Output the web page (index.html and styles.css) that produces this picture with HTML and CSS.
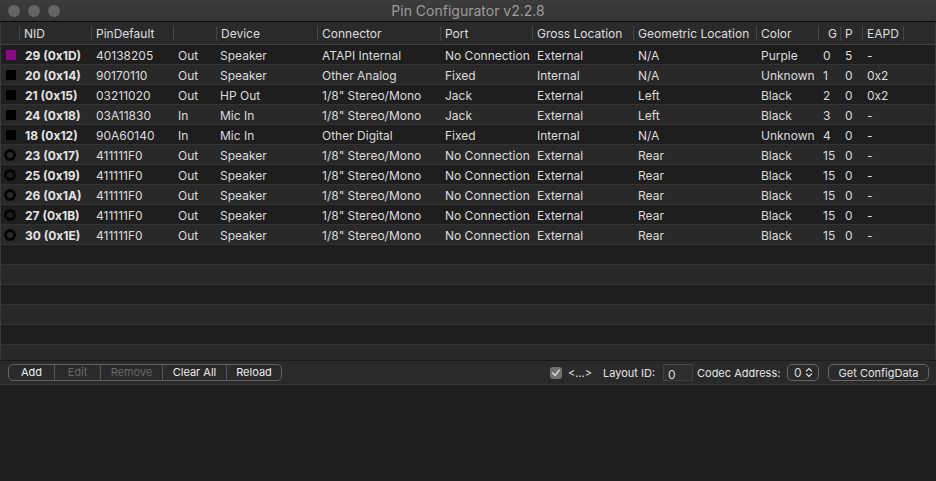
FILE: index.html
```html
<!DOCTYPE html>
<html>
<head>
<meta charset="utf-8">
<link rel="stylesheet" href="styles.css">
</head>
<body>
<div class="window">
  <div class="titlebar">
    <div class="lights"><span class="light"></span><span class="light"></span><span class="light"></span></div>
    <div class="title">Pin Configurator v2.2.8</div>
  </div>
  <div class="table">
    <div class="row head">
      <div class="c"></div>
      <div class="c">NID</div>
      <div class="c">PinDefault</div>
      <div class="c"></div>
      <div class="c">Device</div>
      <div class="c">Connector</div>
      <div class="c">Port</div>
      <div class="c">Gross Location</div>
      <div class="c">Geometric Location</div>
      <div class="c">Color</div>
      <div class="c right">G</div>
      <div class="c">P</div>
      <div class="c">EAPD</div>
      <div class="c last"></div>
    </div>
    <div class="body">
      <div class="row"><div class="c ic"><span class="sq purple"></span></div><div class="c nid">29 (0x1D)</div><div class="c">40138205</div><div class="c">Out</div><div class="c">Speaker</div><div class="c">ATAPI Internal</div><div class="c">No Connection</div><div class="c">External</div><div class="c">N/A</div><div class="c">Purple</div><div class="c">0</div><div class="c">5</div><div class="c">-</div><div class="c"></div></div>
      <div class="row"><div class="c ic"><span class="sq"></span></div><div class="c nid">20 (0x14)</div><div class="c">90170110</div><div class="c">Out</div><div class="c">Speaker</div><div class="c">Other Analog</div><div class="c">Fixed</div><div class="c">Internal</div><div class="c">N/A</div><div class="c">Unknown</div><div class="c">1</div><div class="c">0</div><div class="c">0x2</div><div class="c"></div></div>
      <div class="row"><div class="c ic"><span class="sq"></span></div><div class="c nid">21 (0x15)</div><div class="c">03211020</div><div class="c">Out</div><div class="c">HP Out</div><div class="c">1/8" Stereo/Mono</div><div class="c">Jack</div><div class="c">External</div><div class="c">Left</div><div class="c">Black</div><div class="c">2</div><div class="c">0</div><div class="c">0x2</div><div class="c"></div></div>
      <div class="row"><div class="c ic"><span class="sq"></span></div><div class="c nid">24 (0x18)</div><div class="c">03A11830</div><div class="c">In</div><div class="c">Mic In</div><div class="c">1/8" Stereo/Mono</div><div class="c">Jack</div><div class="c">External</div><div class="c">Left</div><div class="c">Black</div><div class="c">3</div><div class="c">0</div><div class="c">-</div><div class="c"></div></div>
      <div class="row"><div class="c ic"><span class="sq"></span></div><div class="c nid">18 (0x12)</div><div class="c">90A60140</div><div class="c">In</div><div class="c">Mic In</div><div class="c">Other Digital</div><div class="c">Fixed</div><div class="c">Internal</div><div class="c">N/A</div><div class="c">Unknown</div><div class="c">4</div><div class="c">0</div><div class="c">-</div><div class="c"></div></div>
      <div class="row"><div class="c ic"><span class="ring"></span></div><div class="c nid">23 (0x17)</div><div class="c">411111F0</div><div class="c">Out</div><div class="c">Speaker</div><div class="c">1/8" Stereo/Mono</div><div class="c">No Connection</div><div class="c">External</div><div class="c">Rear</div><div class="c">Black</div><div class="c">15</div><div class="c">0</div><div class="c">-</div><div class="c"></div></div>
      <div class="row"><div class="c ic"><span class="ring"></span></div><div class="c nid">25 (0x19)</div><div class="c">411111F0</div><div class="c">Out</div><div class="c">Speaker</div><div class="c">1/8" Stereo/Mono</div><div class="c">No Connection</div><div class="c">External</div><div class="c">Rear</div><div class="c">Black</div><div class="c">15</div><div class="c">0</div><div class="c">-</div><div class="c"></div></div>
      <div class="row"><div class="c ic"><span class="ring"></span></div><div class="c nid">26 (0x1A)</div><div class="c">411111F0</div><div class="c">Out</div><div class="c">Speaker</div><div class="c">1/8" Stereo/Mono</div><div class="c">No Connection</div><div class="c">External</div><div class="c">Rear</div><div class="c">Black</div><div class="c">15</div><div class="c">0</div><div class="c">-</div><div class="c"></div></div>
      <div class="row"><div class="c ic"><span class="ring"></span></div><div class="c nid">27 (0x1B)</div><div class="c">411111F0</div><div class="c">Out</div><div class="c">Speaker</div><div class="c">1/8" Stereo/Mono</div><div class="c">No Connection</div><div class="c">External</div><div class="c">Rear</div><div class="c">Black</div><div class="c">15</div><div class="c">0</div><div class="c">-</div><div class="c"></div></div>
      <div class="row"><div class="c ic"><span class="ring"></span></div><div class="c nid">30 (0x1E)</div><div class="c">411111F0</div><div class="c">Out</div><div class="c">Speaker</div><div class="c">1/8" Stereo/Mono</div><div class="c">No Connection</div><div class="c">External</div><div class="c">Rear</div><div class="c">Black</div><div class="c">15</div><div class="c">0</div><div class="c">-</div><div class="c"></div></div>
      <div class="row empty"></div>
      <div class="row empty"></div>
      <div class="row empty"></div>
      <div class="row empty"></div>
      <div class="row empty"></div>
      <div class="row empty"></div>
    </div>
  </div>
  <div class="toolbar">
    <div class="seg">
      <span class="sb w-add">Add</span>
      <span class="sb w-edit dis">Edit</span>
      <span class="sb w-rem dis">Remove</span>
      <span class="sb w-clear">Clear All</span>
      <span class="sb w-reload">Reload</span>
    </div>
    <div class="spacer"></div>
    <span class="check"><svg width="12" height="12" viewBox="0 0 12 12"><path d="M2.8 6.2 L5 8.5 L9.2 3.2" fill="none" stroke="#d0d0d0" stroke-width="1.6" stroke-linecap="round" stroke-linejoin="round"/></svg></span>
    <span class="lbl dots">&lt;...&gt;</span>
    <span class="lbl layout">Layout ID:</span>
    <span class="field">0</span>
    <span class="lbl codec">Codec Address:</span>
    <span class="popup">0<svg width="8" height="11" viewBox="0 0 8 11"><path d="M1.5 4 L4 1.5 L6.5 4 M1.5 7 L4 9.5 L6.5 7" fill="none" stroke="#d8d8d8" stroke-width="1.2" stroke-linecap="round" stroke-linejoin="round"/></svg></span>
    <span class="btn">Get ConfigData</span>
  </div>
  <div class="bottom"></div>
</div>
</body>
</html>
```

FILE: styles.css
```css
* { box-sizing: border-box; }
html, body { margin: 0; padding: 0; background: #1e1e1e; }
body {
  font-family: "Inter", "Liberation Sans", sans-serif;
  font-size: 12px;
  color: #dcdcdc;
}
.window {
  width: 936px;
  height: 481px;
  display: flex;
  flex-direction: column;
  background: #1e1e1e;
  overflow: hidden;
}
.titlebar {
  height: 22px;
  flex: none;
  display: flex;
  align-items: center;
  background: linear-gradient(#3c3c3c, #353535);
  border-bottom: 1px solid #0c0c0c;
  position: relative;
}
.lights {
  display: flex;
  gap: 8px;
  padding-left: 8px;
}
.light {
  width: 12px;
  height: 12px;
  border-radius: 50%;
  background: #646464;
}
.title {
  position: absolute;
  left: 0;
  right: 0;
  text-align: center;
  font-size: 14px;
  color: #9c9c9c;
  top: 2px;
}
.table {
  flex: none;
  height: 338px;
  display: flex;
  flex-direction: column;
  border-left: 1px solid #3a3a3a;
  border-right: 1px solid #3a3a3a;
  overflow: hidden;
  background: #282828;
}
.body { flex: none; }
.row {
  flex: none;
  display: grid;
  grid-template-columns: 19px 72px 82px 43px 101px 123px 92px 101px 123px 62px 22px 22px 41px 1fr;
  height: 20px;
  align-items: center;
  border-bottom: 1px solid #333333;
  white-space: nowrap;
}
.body .row:nth-child(odd) { background: #1e1e1e; }
.body .row:nth-child(even) { background: #292929; }
.row.head {
  height: 23px;
  background: #2a2a2a;
  border-bottom: 1px solid #404040;
  color: #dedede;
}
.head .c {
  border-right: 1px solid #454545;
  height: 15px;
  line-height: 15px;
}
.head .c.last { border-right: none; }
.head .c.right { text-align: right; padding-right: 3px; }
.c {
  padding-left: 4px;
  overflow: hidden;
}
.body .c {
  height: 19px;
  padding-top: 3px;
  line-height: 16px;
}
.body .c:nth-child(2) { padding-left: 5px; }
.body .c:nth-child(5) { padding-left: 3px; }
.nid { font-weight: 700; color: #e4e4e4; }
.body .c.ic {
  display: flex;
  align-items: center;
  padding: 1px 0 0 3px;
}
.sq {
  width: 10px;
  height: 10px;
  margin-left: 2px;
  background: #000;
}
.sq.purple { background: #8a0a8a; }
.ring {
  width: 12px;
  height: 12px;
  border-radius: 50%;
  border: 3px solid #050505;
}
.toolbar {
  flex: none;
  height: 25px;
  display: flex;
  align-items: center;
  background: #2a2a2a;
  border-top: 1px solid #1a1a1a;
  border-bottom: 1px solid #353535;
  padding: 0 7px 0 8px;
  font-size: 11px;
}
.seg {
  display: flex;
  height: 17px;
  border: 1px solid #626262;
  border-radius: 5px;
}
.sb {
  display: flex;
  align-items: center;
  justify-content: center;
  color: #ececec;
  border-right: 1px solid #555555;
  line-height: 15px;
}
.sb:last-child { border-right: none; }
.sb.dis { color: #686868; }
.w-add { width: 46px; }
.w-edit { width: 46px; }
.w-rem { width: 62px; }
.w-clear { width: 64px; }
.w-reload { width: 54px; }
.spacer { flex: 1; }
.check {
  width: 12px;
  height: 12px;
  border-radius: 3px;
  background: #707070;
  display: flex;
  margin-right: 6px;
  flex: none;
}
.lbl { color: #e4e4e4; flex: none; white-space: nowrap; }
.dots { width: 35px; }
.layout { width: 60px; }
.codec { width: 90px; }
.field {
  flex: none;
  width: 30px;
  height: 17px;
  background: #2e2e2e;
  border: 1px solid #404040;
  border-top-color: #4a4a4a;
  padding: 2px 0 0 4px;
  line-height: 15px;
  margin-right: 4px;
  font-size: 12px;
}
.popup {
  flex: none;
  width: 32px;
  height: 17px;
  border: 1px solid #666666;
  border-radius: 5px;
  display: flex;
  align-items: center;
  justify-content: space-between;
  padding: 0 5px 0 6px;
  margin-right: 9px;
  font-size: 12px;
}
.btn {
  flex: none;
  width: 101px;
  height: 17px;
  border: 1px solid #666666;
  border-radius: 5px;
  display: flex;
  align-items: center;
  justify-content: center;
  color: #e4e4e4;
}
.bottom {
  flex: 1;
  background: #1f1f1f;
}
```
